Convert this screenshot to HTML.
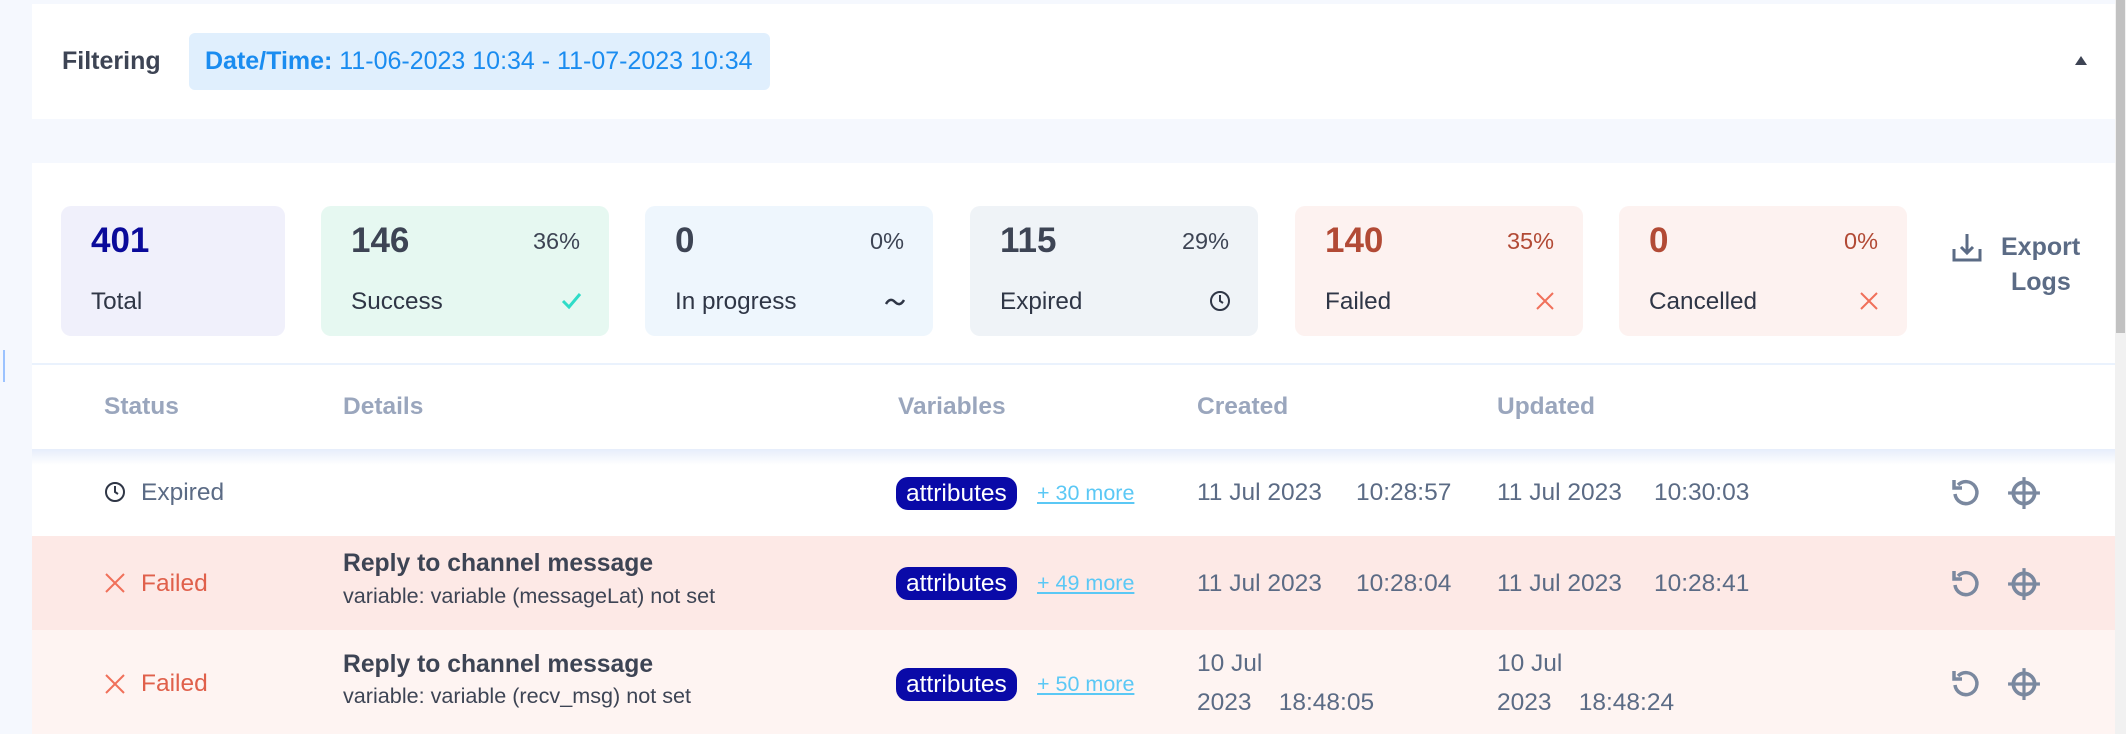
<!DOCTYPE html>
<html><head><meta charset="utf-8"><style>
*{margin:0;padding:0;box-sizing:border-box}
body{width:2126px;height:734px;overflow:hidden;background:#f5f8fe;font-family:"Liberation Sans",sans-serif;position:relative;color:#3d4454}
.a{position:absolute;white-space:nowrap}
.card{position:absolute;background:#fff}
.box{position:absolute;top:206px;width:288px;height:130px;border-radius:10px}
.num{position:absolute;left:30px;top:15px;font-size:35px;font-weight:bold;line-height:40px}
.pct{position:absolute;right:29px;top:20px;font-size:23.5px;line-height:30px}
.lbl{position:absolute;left:30px;top:81px;font-size:24.3px;line-height:30px;color:#2f3646}
.ic{position:absolute;right:27px;top:84px}
.hd{position:absolute;top:393px;font-size:24.5px;font-weight:bold;color:#9aa6bd;line-height:28px}
.row{position:absolute;left:32px;width:2083px}
.t{position:absolute;font-size:24.5px;color:#5b6b85;line-height:30px;white-space:nowrap}
.pill{position:absolute;left:864px;height:33px;padding:0 10px;border-radius:12px;background:#0a0aa8;color:#fff;font-size:24.5px;line-height:33px}
.more{position:absolute;left:1005px;font-size:21.5px;color:#5bc8f5;text-decoration:underline;line-height:26px}
.ttl{position:absolute;left:311px;font-size:24.7px;font-weight:bold;color:#3d4454;line-height:28px}
.sub{position:absolute;left:311px;font-size:21.6px;color:#3d4454;line-height:26px}
</style></head><body>
<div class="a" style="left:3px;top:350px;width:2px;height:32px;background:#9cc3ff"></div>
<div class="card" style="left:32px;top:4px;width:2083px;height:115px"></div>
<div class="a" style="left:62px;top:47px;font-size:25px;font-weight:bold;color:#3d4454">Filtering</div>
<div class="a" style="left:189px;top:33px;width:581px;height:57px;background:#e0effd;border-radius:6px;font-size:25px;color:#1a8cf0;line-height:57px;padding-left:16px"><b>Date/Time:</b> 11-06-2023 10:34 - 11-07-2023 10:34</div>
<div class="a" style="left:2075px;top:56px;width:0;height:0;border-left:6px solid transparent;border-right:6px solid transparent;border-bottom:9px solid #3d4454"></div>
<div class="a" style="left:2115px;top:0;width:11px;height:734px;background:#f1f1f1"></div>
<div class="a" style="left:2116px;top:0;width:9px;height:333px;background:#c1c1c1"></div>

<div class="card" style="left:32px;top:163px;width:2083px;height:571px"></div>
<div class="box" style="left:61px;width:224px;background:#f0f0fb"><div class="num" style="color:#0a0a9a">401</div><div class="lbl">Total</div></div>
<div class="box" style="left:321px;background:#e6f8f1"><div class="num">146</div><div class="pct">36%</div><div class="lbl">Success</div>
<svg class="ic" width="22" height="22" viewBox="0 0 22 22"><path d="M3 11l6 6L20 4" fill="none" stroke="#2fdcc8" stroke-width="3"/></svg></div>
<div class="box" style="left:645px;background:#eef6fd"><div class="num">0</div><div class="pct">0%</div><div class="lbl">In progress</div>
<svg class="ic" width="22" height="22" viewBox="0 0 22 22"><path d="M2 14q4-7 9-2t9-2" fill="none" stroke="#2f3646" stroke-width="2.5"/></svg></div>
<div class="box" style="left:970px;background:#eff3f7"><div class="num">115</div><div class="pct">29%</div><div class="lbl">Expired</div>
<svg class="ic" width="22" height="22" viewBox="0 0 22 22"><circle cx="11" cy="11" r="9" fill="none" stroke="#2f3646" stroke-width="2"/><path d="M11 5v6l3 2" fill="none" stroke="#2f3646" stroke-width="2"/></svg></div>
<div class="box" style="left:1295px;background:#fdf2f0"><div class="num" style="color:#b24a35">140</div><div class="pct" style="color:#b24a35">35%</div><div class="lbl">Failed</div>
<svg class="ic" width="22" height="22" viewBox="0 0 22 22"><path d="M3 3l16 16M19 3L3 19" stroke="#f0705a" stroke-width="2"/></svg></div>
<div class="box" style="left:1619px;background:#fdf2f0"><div class="num" style="color:#b24a35">0</div><div class="pct" style="color:#b24a35">0%</div><div class="lbl">Cancelled</div>
<svg class="ic" width="22" height="22" viewBox="0 0 22 22"><path d="M3 3l16 16M19 3L3 19" stroke="#f0705a" stroke-width="2"/></svg></div>
<svg class="a" style="left:1951px;top:231px" width="32" height="32" viewBox="0 0 32 32"><path d="M3 18v11h26V18M16 3v19M10 16l6 6 6-6" fill="none" stroke="#5b6b85" stroke-width="3"/></svg>
<div class="a" style="left:2001px;top:232px;font-size:25px;font-weight:bold;color:#5b6b85;line-height:30px">Export</div>
<div class="a" style="left:2011px;top:267px;font-size:25px;font-weight:bold;color:#5b6b85;line-height:30px">Logs</div>
<div class="a" style="left:32px;top:363px;width:2083px;height:2px;background:#eaf2fd"></div>

<div class="hd" style="left:104px">Status</div>
<div class="hd" style="left:343px">Details</div>
<div class="hd" style="left:898px">Variables</div>
<div class="hd" style="left:1197px">Created</div>
<div class="hd" style="left:1497px">Updated</div>
<div class="a" style="left:32px;top:449px;width:2083px;height:16px;background:linear-gradient(#e6edfb,#fff)"></div>

<div class="row" style="top:449px;height:87px">
<svg class="a" style="left:72px;top:32px" width="22" height="22" viewBox="0 0 22 22"><circle cx="11" cy="11" r="9" fill="none" stroke="#2f3646" stroke-width="2"/><path d="M11 5v6l3 2" fill="none" stroke="#2f3646" stroke-width="2"/></svg>
<div class="t" style="left:109px;top:29px">Expired</div>
<div class="pill" style="top:28px">attributes</div><div class="more" style="top:31px">+ 30 more</div>
<div class="t" style="left:1165px;top:29px">11 Jul 2023</div><div class="t" style="left:1324px;top:29px">10:28:57</div>
<div class="t" style="left:1465px;top:29px">11 Jul 2023</div><div class="t" style="left:1622px;top:29px">10:30:03</div>
</div>
<div class="row" style="top:536px;height:94px;background:#fde9e6">
<svg class="a" style="left:72px;top:36px" width="22" height="22" viewBox="0 0 22 22"><path d="M2 2l18 18M20 2L2 20" stroke="#f0705a" stroke-width="2"/></svg>
<div class="t" style="left:109px;top:33px;color:#e0604b">Failed</div>
<div class="ttl" style="top:14px">Reply to channel message</div><div class="sub" style="top:47px">variable: variable (messageLat) not set</div>
<div class="pill" style="top:31px">attributes</div><div class="more" style="top:34px">+ 49 more</div>
<div class="t" style="left:1165px;top:33px">11 Jul 2023</div><div class="t" style="left:1324px;top:33px">10:28:04</div>
<div class="t" style="left:1465px;top:33px">11 Jul 2023</div><div class="t" style="left:1622px;top:33px">10:28:41</div>
</div>
<div class="row" style="top:630px;height:104px;background:#fef4f2">
<svg class="a" style="left:72px;top:43px" width="22" height="22" viewBox="0 0 22 22"><path d="M2 2l18 18M20 2L2 20" stroke="#f0705a" stroke-width="2"/></svg>
<div class="t" style="left:109px;top:39px;color:#e0604b">Failed</div>
<div class="ttl" style="top:21px">Reply to channel message</div><div class="sub" style="top:53px">variable: variable (recv_msg) not set</div>
<div class="pill" style="top:38px">attributes</div><div class="more" style="top:41px">+ 50 more</div>
<div class="t" style="left:1165px;top:19px">10 Jul</div><div class="t" style="left:1165px;top:58px">2023&nbsp;&nbsp;&nbsp;&nbsp;18:48:05</div>
<div class="t" style="left:1465px;top:19px">10 Jul</div><div class="t" style="left:1465px;top:58px">2023&nbsp;&nbsp;&nbsp;&nbsp;18:48:24</div>
</div>
<svg width="0" height="0" style="position:absolute"><defs>
<g id="rt"><path d="M8 8a11 11 0 1 1-3 9" fill="none" stroke="#7a889f" stroke-width="3.5"/><path d="M4 3v8h8" fill="none" stroke="#7a889f" stroke-width="3.5"/></g>
<g id="tg"><circle cx="16" cy="16" r="10" fill="none" stroke="#7a889f" stroke-width="3.5"/><path d="M16 1v30M1 16h30" stroke="#7a889f" stroke-width="3"/></g></defs></svg>
<svg class="a" style="left:1950px;top:477px" width="32" height="32" viewBox="0 0 32 32"><use href="#rt"/></svg>
<svg class="a" style="left:2007px;top:476px" width="34" height="34" viewBox="0 0 32 32"><use href="#tg"/></svg>
<svg class="a" style="left:1950px;top:568px" width="32" height="32" viewBox="0 0 32 32"><use href="#rt"/></svg>
<svg class="a" style="left:2007px;top:567px" width="34" height="34" viewBox="0 0 32 32"><use href="#tg"/></svg>
<svg class="a" style="left:1950px;top:668px" width="32" height="32" viewBox="0 0 32 32"><use href="#rt"/></svg>
<svg class="a" style="left:2007px;top:667px" width="34" height="34" viewBox="0 0 32 32"><use href="#tg"/></svg>
</body></html>
